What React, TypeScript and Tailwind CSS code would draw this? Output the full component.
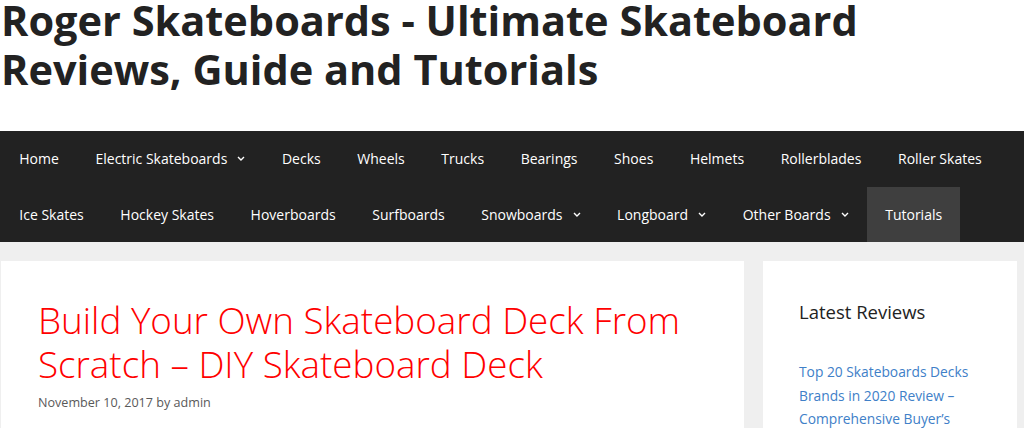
import React from "react";

const Chevron = () => (
  <svg width="8" height="5" viewBox="0 0 8 5" className="ml-[10px] inline-block" fill="none">
    <path d="M1 1l3 3 3-3" stroke="#ffffff" strokeWidth="1.4" />
  </svg>
);

type Item = { label: string; sub?: boolean; active?: boolean };

const items: Item[] = [
  { label: "Home" },
  { label: "Electric Skateboards", sub: true },
  { label: "Decks" },
  { label: "Wheels" },
  { label: "Trucks" },
  { label: "Bearings" },
  { label: "Shoes" },
  { label: "Helmets" },
  { label: "Rollerblades" },
  { label: "Roller Skates" },
  { label: "Ice Skates" },
  { label: "Hockey Skates" },
  { label: "Hoverboards" },
  { label: "Surfboards" },
  { label: "Snowboards", sub: true },
  { label: "Longboard", sub: true },
  { label: "Other Boards", sub: true },
  { label: "Tutorials", active: true },
];

export default function App() {
  return (
    <div className="w-[1024px] h-[428px] overflow-hidden bg-[#efefef]" style={{ fontFamily: '"Open Sans", sans-serif' }}>
      <header className="bg-white h-[131px] pl-[1px] flex flex-col">
        <h1 className="text-[41.5px] leading-[49px] font-bold text-[#222222] -mt-[4px]">
          Roger Skateboards - Ultimate Skateboard
          <br />
          Reviews, Guide and Tutorials
        </h1>
      </header>
      <nav className="bg-[#222222] pl-[1px]">
        <ul className="flex flex-wrap">
          {items.map((it) => (
            <li
              key={it.label}
              className={`flex items-center h-[55.5px] px-[18.3px] text-[14px] text-white ${it.active ? "bg-[#3f3f3f]" : ""}`}
            >
              {it.label}
              {it.sub && <Chevron />}
            </li>
          ))}
        </ul>
      </nav>
      <div className="flex gap-[19px] pt-[19px] pl-[1px]">
        <article className="w-[743px] bg-white pt-[37px] px-[37px] h-[200px]">
          <h2 className="text-[36.8px] leading-[44px] font-light text-[#ff0000]">
            Build Your Own Skateboard Deck From Scratch – DIY Skateboard Deck
          </h2>
          <div className="mt-[8px] text-[12.6px] text-[#595959]">November 10, 2017 by admin</div>
        </article>
        <aside className="w-[254px] bg-white pt-[39px] px-[36px] h-[200px]">
          <h3 className="text-[18.5px] leading-[24px] text-[#222222]">Latest Reviews</h3>
          <a className="block mt-[36px] text-[13.8px] leading-[23.5px] text-[#4080c8]">
            Top 20 Skateboards Decks Brands in 2020 Review – Comprehensive Buyer’s Guide
          </a>
        </aside>
      </div>
    </div>
  );
}
